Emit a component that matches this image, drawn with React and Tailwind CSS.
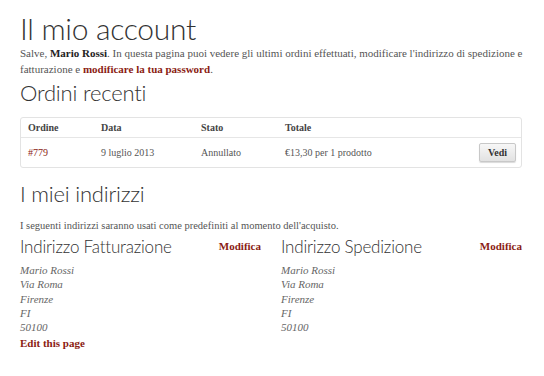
import React from 'react';

const serif = "font-['Liberation_Serif',_'DejaVu_Serif',_serif]";
const sans = "font-['Lato',_'Open_Sans',_sans-serif]";

const AddressBlock = ({ title, showEdit }) => (
    <div className="w-[241px]">
        <div className="flex items-start justify-between">
            <h3 className={`${sans} font-light text-[17px] leading-[20px] tracking-[-0.2px] text-[#333]`}>{title}</h3>
            <a className="text-[11px] font-bold text-[#8b1c13] mt-[1px]">Modifica</a>
        </div>
        <address className="mt-[6px] italic text-[11px] leading-[14.3px] text-[#666]">
            Mario Rossi<br />
            Via Roma<br />
            Firenze<br />
            FI<br />
            50100
        </address>
        {showEdit && (
            <a className="block mt-[1px] text-[11px] font-bold text-[#8b1c13]">Edit this page</a>
        )}
    </div>
);

const App = () => {
    return (
        <div className={`min-h-screen w-[544px] bg-white px-[20px] pt-[11px] ${serif} text-[#555]`}>
            {/* Page title */}
            <h1 className={`${sans} font-light text-[30px] leading-[34px] tracking-[-0.3px] text-[#333]`}>Il mio account</h1>
            <p className="text-[11px] leading-[16px]">
                Salve, <strong className="text-[#222]">Mario Rossi</strong>. In questa pagina puoi vedere gli ultimi ordini effettuati, modificare l'indirizzo di spedizione e fatturazione e <a className="font-bold text-[#8b1c13]">modificare la tua password</a>.
            </p>

            {/* Recent orders */}
            <h2 className={`${sans} font-light text-[22px] leading-[26px] tracking-[-0.2px] text-[#333] mt-[3px]`}>Ordini recenti</h2>
            <div className="mt-[11px] w-[502px] border border-[#e3e3e3] rounded-[3px] text-[10px]">
                <div className="flex h-[20px] items-center border-b border-[#e6e6e6] font-bold text-[#444]">
                    <div className="w-[73px] pl-[7px]">Ordine</div>
                    <div className="w-[100px] pl-[7px]">Data</div>
                    <div className="w-[84px] pl-[7px]">Stato</div>
                    <div className="flex-1 pl-[7px]">Totale</div>
                </div>
                <div className="flex h-[29px] items-center">
                    <div className="w-[73px] pl-[7px] text-[#8b1c13]">#779</div>
                    <div className="w-[100px] pl-[7px]">9 luglio 2013</div>
                    <div className="w-[84px] pl-[7px]">Annullato</div>
                    <div className="flex-1 pl-[7px]">€13,30 per 1 prodotto</div>
                    <button className="mr-[5px] h-[19px] w-[37px] rounded-[2px] border border-[#c8c8c8] bg-gradient-to-b from-[#f7f7f7] to-[#e2e2e2] text-[10px] font-bold text-[#333] shadow-[0_1px_1px_rgba(0,0,0,0.15)]">
                        Vedi
                    </button>
                </div>
            </div>

            {/* Addresses */}
            <h2 className={`${sans} font-light text-[22px] leading-[26px] tracking-[-0.2px] text-[#333] mt-[13px]`}>I miei indirizzi</h2>
            <p className="mt-[12px] text-[10.5px] leading-[14px]">I seguenti indirizzi saranno usati come predefiniti al momento dell'acquisto.</p>
            <div className="mt-[4px] flex gap-[20px]">
                <AddressBlock title="Indirizzo Fatturazione" showEdit />
                <AddressBlock title="Indirizzo Spedizione" />
            </div>
        </div>
    );
};

export default App;
